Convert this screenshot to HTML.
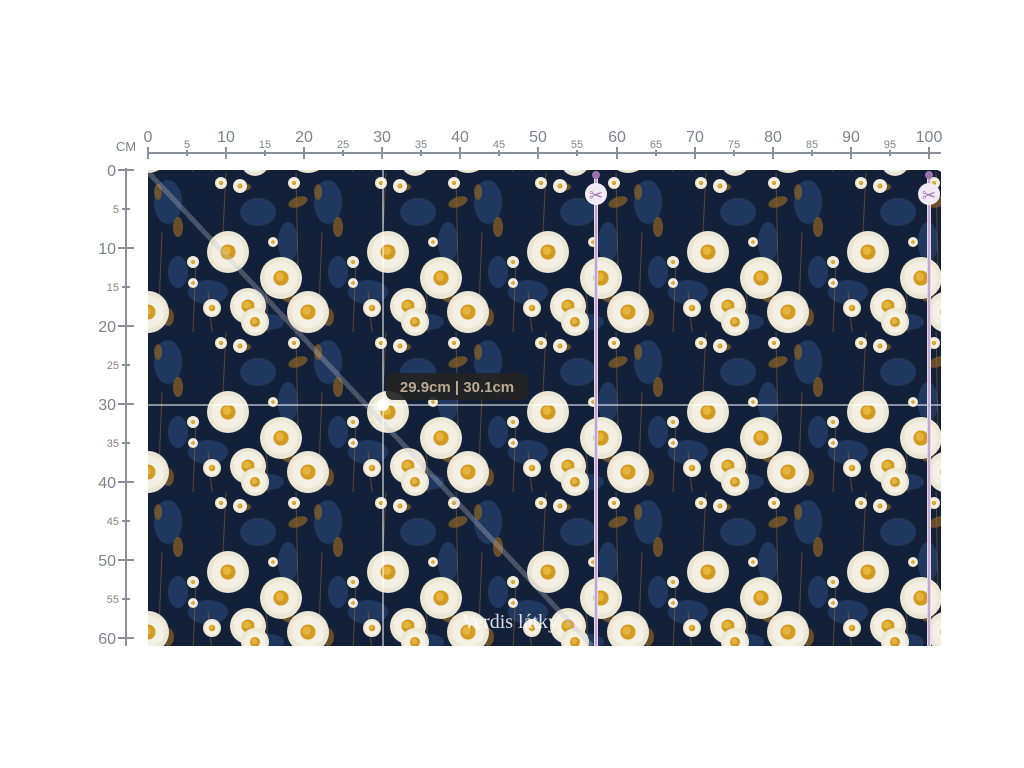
<!DOCTYPE html>
<html><head><meta charset="utf-8"><style>
html,body{margin:0;padding:0;background:#fff;width:1024px;height:768px;overflow:hidden}
svg{position:absolute;left:0;top:0}
</style></head><body>
<svg width="1024" height="768" viewBox="0 0 1024 768" font-family="Liberation Sans, sans-serif">
<defs>
<g id="d">
 <circle r="1" fill="#ece6d4"/>
 <circle r="0.78" fill="#f4f0e4"/>
 <circle r="0.36" fill="#d39a22"/>
 <circle r="0.2" cx="-0.06" cy="-0.06" fill="#e6b43c"/>
</g>
<pattern id="p" patternUnits="userSpaceOnUse" x="148" y="172" width="160" height="160">
 <rect width="160" height="160" fill="#122039"/>
 <g fill="#23406c" opacity="0.75">
  <ellipse cx="20" cy="30" rx="14" ry="22"/><ellipse cx="110" cy="40" rx="18" ry="14"/>
  <ellipse cx="60" cy="120" rx="20" ry="12"/><ellipse cx="140" cy="70" rx="10" ry="20"/>
  <ellipse cx="30" cy="100" rx="10" ry="16"/><ellipse cx="120" cy="150" rx="16" ry="8"/>
 </g>
 <g fill="#7d5a26" opacity="0.8">
  <ellipse cx="150" cy="30" rx="10" ry="5" transform="rotate(-20 150 30)"/>
  <ellipse cx="30" cy="55" rx="5" ry="10"/>
  <ellipse cx="10" cy="20" rx="4" ry="8"/>
  <ellipse cx="140" cy="125" rx="10" ry="5" transform="rotate(25 140 125)"/>
  <ellipse cx="95" cy="15" rx="8" ry="4"/>
  <ellipse cx="20" cy="145" rx="6" ry="9"/>
 </g>
 <g stroke="#8a6428" stroke-width="1" fill="none" opacity="0.6">
  <path d="M45 160 L48 90 M64 160 L60 120 M120 160 L118 110 M10 160 L14 60 M150 100 L148 0 M75 60 L78 0"/>
 </g>
 <use href="#d" transform="translate(80 80) scale(21)"/>
 <use href="#d" transform="translate(133 106) scale(21)"/>
 <use href="#d" transform="translate(100 134) scale(18)"/>
 <use href="#d" transform="translate(107 150) scale(14)"/>
 <use href="#d" transform="translate(107 -10) scale(14)"/>
 <use href="#d" transform="translate(0 140) scale(21)"/>
 <use href="#d" transform="translate(160 140) scale(21)"/>
 <use href="#d" transform="translate(0 -20) scale(21)"/>
 <use href="#d" transform="translate(160 -20) scale(21)"/>
 <use href="#d" transform="translate(64 136) scale(9)"/>
 <use href="#d" transform="translate(45 90) scale(6)"/>
 <use href="#d" transform="translate(45 111) scale(5)"/>
 <use href="#d" transform="translate(73 11) scale(6)"/>
 <use href="#d" transform="translate(92 14) scale(7)"/>
 <use href="#d" transform="translate(146 11) scale(6)"/>
 <use href="#d" transform="translate(125 70) scale(5)"/>
</pattern>
</defs>
<rect x="148" y="170" width="793" height="476" fill="url(#p)"/>
<line x1="148" y1="172" x2="592" y2="646" stroke="#c8c8d0" stroke-width="5" opacity="0.3"/>
<line x1="383" y1="170" x2="383" y2="646" stroke="#fff" stroke-width="1"/>
<line x1="148" y1="405" x2="941" y2="405" stroke="#fff" stroke-width="1"/>
<circle cx="383" cy="405" r="6" fill="#fff"/>
<rect x="386" y="373" width="142" height="27" rx="7" fill="#232323" opacity="0.92"/>
<text x="457" y="392" text-anchor="middle" font-size="15" font-weight="bold" fill="#b9a995">29.9cm | 30.1cm</text>
<g>
 <rect x="594" y="176" width="4" height="470" fill="#e6d6ec"/><line x1="596" y1="176" x2="596" y2="646" stroke="#9a76a6" stroke-width="1"/>
 <circle cx="596" cy="175" r="4" fill="#9b74ae"/><circle cx="596" cy="194" r="11" fill="#f2ebf5"/>
 <text x="596" y="201" text-anchor="middle" font-size="17" fill="#9b74ae">✂</text>
 <rect x="927" y="176" width="4" height="470" fill="#e6d6ec"/><line x1="929" y1="176" x2="929" y2="646" stroke="#9a76a6" stroke-width="1"/>
 <circle cx="929" cy="175" r="4" fill="#9b74ae"/><circle cx="929" cy="194" r="11" fill="#f2ebf5"/>
 <text x="929" y="201" text-anchor="middle" font-size="17" fill="#9b74ae">✂</text>
</g>
<text x="510" y="628" text-anchor="middle" font-family="Liberation Serif, serif" font-size="20" fill="#fff" opacity="0.85">Verdis látky</text>
<g stroke="#8a9099" stroke-width="2">
 <line x1="148" y1="153" x2="941" y2="153"/>
 <path d="M148 147V159M226 147V159M304 147V159M382 147V159M460 147V159M538 147V159M617 147V159M695 147V159M773 147V159M851 147V159M929 147V159"/>
 <path d="M187 150V156M265 150V156M343 150V156M421 150V156M499 150V156M577 150V156M656 150V156M734 150V156M812 150V156M890 150V156"/>
 <line x1="126" y1="168" x2="126" y2="646"/>
 <path d="M118 170H134M118 248H134M118 326H134M118 404H134M118 482H134M118 560H134M118 638H134"/>
 <path d="M122 209H130M122 287H130M122 365H130M122 443H130M122 521H130M122 599H130"/>
</g>
<g fill="#7d838c" text-anchor="middle">
 <text x="126" y="151" font-size="13">CM</text>
 <g font-size="16"><text x="148" y="142">0</text><text x="226" y="142">10</text><text x="304" y="142">20</text><text x="382" y="142">30</text><text x="460" y="142">40</text><text x="538" y="142">50</text><text x="617" y="142">60</text><text x="695" y="142">70</text><text x="773" y="142">80</text><text x="851" y="142">90</text><text x="929" y="142">100</text></g>
 <g font-size="11"><text x="187" y="148">5</text><text x="265" y="148">15</text><text x="343" y="148">25</text><text x="421" y="148">35</text><text x="499" y="148">45</text><text x="577" y="148">55</text><text x="656" y="148">65</text><text x="734" y="148">75</text><text x="812" y="148">85</text><text x="890" y="148">95</text></g>
</g>
<g fill="#7d838c" text-anchor="end">
 <g font-size="16"><text x="116" y="176">0</text><text x="116" y="254">10</text><text x="116" y="332">20</text><text x="116" y="410">30</text><text x="116" y="488">40</text><text x="116" y="566">50</text><text x="116" y="644">60</text></g>
 <g font-size="11"><text x="119" y="213">5</text><text x="119" y="291">15</text><text x="119" y="369">25</text><text x="119" y="447">35</text><text x="119" y="525">45</text><text x="119" y="603">55</text></g>
</g>
</svg>
</body></html>
